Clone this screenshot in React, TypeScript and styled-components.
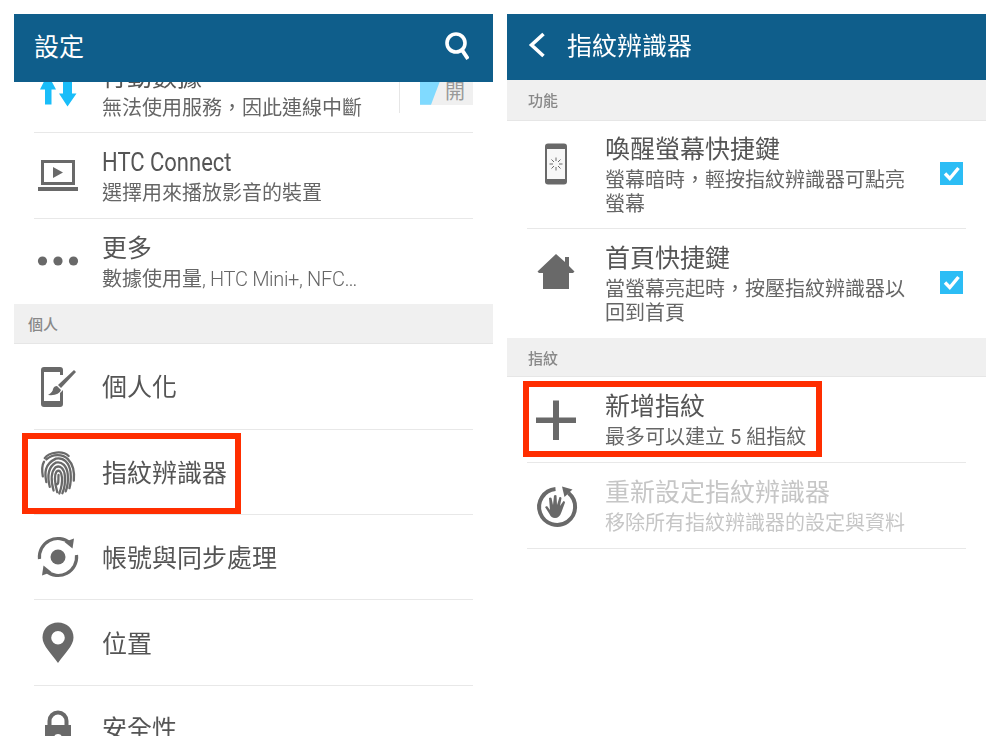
import React from "react";
import styled, { createGlobalStyle } from "styled-components";

const GlobalStyle = createGlobalStyle`
  * { box-sizing: border-box; }
  html, body { margin: 0; padding: 0; background: #fff; }
  body { font-family: Roboto, "Noto Sans CJK TC", sans-serif; }
`;

const Page = styled.div`
  display: flex;
  gap: 14px;
  padding: 14px 0 0 14px;
  width: 1000px;
  height: 736px;
  overflow: hidden;
  filter: blur(0.4px);
`;

const Panel = styled.section`
  flex: none;
  display: flex;
  flex-direction: column;
  width: 479px;
  height: 722px;
  overflow: hidden;
`;

const Header = styled.header<{ $height: number; $inset: number }>`
  position: relative;
  z-index: 2;
  flex: none;
  display: flex;
  align-items: center;
  height: ${(p) => p.$height}px;
  padding: 0 24px 0 ${(p) => p.$inset}px;
  background: #0f5e8b;
  color: #fff;
`;

const HeaderTitle = styled.h1`
  flex: 1;
  margin: 0;
  font-size: 25px;
  line-height: 32px;
  font-weight: 400;
`;

const BackButton = styled.span`
  display: flex;
  width: 39px;
  margin-top: -4px;
`;

const List = styled.div<{ $offset?: number }>`
  display: flex;
  flex-direction: column;
  margin-top: ${(p) => p.$offset ?? 0}px;
`;

const Section = styled.div<{ $inset: number; $height?: number; $lift?: number }>`
  flex: none;
  display: flex;
  align-items: center;
  height: ${(p) => p.$height ?? 40}px;
  padding: 0 0 ${(p) => p.$lift ?? 0}px ${(p) => p.$inset}px;
  background: #f0f0f0;
  border-bottom: 1px solid #e6e6e6;
  color: #888;
  font-size: 15px;
  font-weight: 500;
`;

const Row = styled.div<{ $height?: number; $last?: boolean }>`
  position: relative;
  flex: none;
  display: flex;
  align-items: center;
  height: ${(p) => p.$height ?? 85.4}px;
  margin: 0 20px;
  border-bottom: ${(p) => (p.$last ? "none" : "1px solid #e8e8e8")};
`;

const IconBox = styled.div<{ $width: number }>`
  flex: none;
  align-self: flex-start;
  display: flex;
  align-items: center;
  justify-content: center;
  width: ${(p) => p.$width}px;
  height: 85px;
`;

const Texts = styled.div`
  flex: 1;
  min-width: 0;
  margin-left: 20px;
`;

const Title = styled.div<{ $disabled?: boolean }>`
  padding-top: 4px;
  color: ${(p) => (p.$disabled ? "#c6c6c6" : "#555")};
  font-size: 25px;
  line-height: 32px;
  white-space: nowrap;
`;

const CondensedName = styled.span`
  display: inline-block;
  transform: scaleX(0.88);
  transform-origin: left center;
`;

const Sub = styled.div<{ $disabled?: boolean; $nowrap?: boolean }>`
  max-width: ${(p) => (p.$nowrap ? "none" : "302px")};
  margin: 2px 0 3px;
  color: ${(p) => (p.$disabled ? "#c6c6c6" : "#666")};
  font-size: 20px;
  line-height: 24px;
`;

const LightLatin = styled.span`
  font-weight: 300;
  letter-spacing: -0.33px;
`;

const Check = styled.div`
  flex: none;
  display: flex;
  align-items: center;
  justify-content: center;
  width: 23px;
  height: 23px;
  margin: 0 3px 3px 0;
  background: #2cbdf5;
`;

const SwitchRule = styled.div`
  flex: none;
  width: 1px;
  height: 45px;
  margin-right: 20px;
  background: #e6e6e6;
`;

const Switch = styled.div`
  position: relative;
  flex: none;
  display: flex;
  align-items: flex-end;
  justify-content: flex-end;
  width: 53px;
  height: 29px;
  padding-right: 8px;
  background: #f0f0f0;
  color: #999;
  font-size: 20px;
  line-height: 25px;
`;

const SwitchFill = styled.div`
  position: absolute;
  left: 0;
  top: 0;
  width: 22px;
  height: 100%;
  background: #80daff;
  clip-path: polygon(0 0, 100% 0, 50% 100%, 0 100%);
`;

const Highlight = styled.div<{ $left: number; $top: number; $width: number; $height: number; $border: number }>`
  position: absolute;
  z-index: 1;
  left: ${(p) => p.$left}px;
  top: ${(p) => p.$top}px;
  width: ${(p) => p.$width}px;
  height: ${(p) => p.$height}px;
  border: ${(p) => p.$border}px solid #ff2e00;
`;

const GREY = "#696969";

const Svg: React.FC<{ size?: number; children: React.ReactNode }> = ({ size = 48, children }) => (
  <svg width={size} height={size} viewBox={`0 0 ${size} ${size}`} fill="none">
    {children}
  </svg>
);

const SearchIcon = () => (
  <svg width="28" height="32" viewBox="0 0 28 32" fill="none" stroke="#fff">
    <circle cx="15" cy="11" r="9" strokeWidth="3.6" />
    <path d="M21 18 L27 27" strokeWidth="4" />
  </svg>
);

const BackIcon = () => (
  <svg width="18" height="26" viewBox="0 0 18 26" fill="none" stroke="#fff" strokeWidth="3.6">
    <path d="M15.5 2 L3.5 13 L15.5 24" />
  </svg>
);

const DataIcon = () => (
  <Svg>
    <path d="M6 22.5 L13.7 7 L22 22.5 H17.5 V37.5 H11 V22.5 Z" fill="#19bdf9" />
    <path d="M29 15 H38 V26.5 H42.5 L33.5 39.5 L25 26.5 H29 Z" fill="#19bdf9" />
  </Svg>
);

const ConnectIcon = () => (
  <Svg>
    <rect x="8.5" y="9.5" width="31" height="22" stroke={GREY} strokeWidth="3" />
    <path d="M19 15 L29 20.5 L19 26 Z" fill={GREY} />
    <rect x="4" y="35" width="40" height="4" fill={GREY} />
  </Svg>
);

const MoreIcon = () => (
  <Svg>
    <circle cx="8.5" cy="24" r="4.6" fill={GREY} />
    <circle cx="24" cy="24" r="4.6" fill={GREY} />
    <circle cx="39.5" cy="24" r="4.6" fill={GREY} />
  </Svg>
);

const BrushIcon = () => (
  <Svg>
    <path
      d="M10 4 H26 Q29 4 29 7 V12 H26 V9 H10 V38 H26 V30 L29 27 V41 Q29 44 26 44 H10 Q7 44 7 41 V7 Q7 4 10 4 Z"
      fill={GREY}
    />
    <path d="M40 7 L42 9 L27 25 L24 22 Z" fill={GREY} />
    <path d="M23 23 L27 27 Q25 33 14 32 Q19 29 19 26 Q20 23 23 23 Z" fill={GREY} />
  </Svg>
);

const FingerprintIcon = () => (
  <Svg>
    <g stroke={GREY} strokeWidth="2.3" strokeLinecap="round" transform="rotate(-5 24 24)">
      <path d="M12 9 C17 3 31 3 36 9" />
      <path d="M8.5 27 C8 21 8.5 16 11 12.5" />
      <path d="M13.5 10.5 C20 5.5 30 6 35 12 C40 18 40.5 26 39 34" />
      <path d="M11.5 33 C10.5 24 11 15 23 10.5 C31 9.5 36 16 36.5 25 C36.5 31 36 36 34 41" />
      <path d="M14.5 38 C13 28 13.5 18.5 22.5 14.5 C29 13.5 33.5 19 33.5 27 C33.5 33 32.5 39 30 44" />
      <path d="M18 42 C16.5 34 16 24 22 19 C27 17 30.5 21.5 30.5 28 C30.5 35 29 41 26.5 45.5" />
      <path d="M21.5 44 C20 36 18.8 28 22.5 23.5 C25.5 21.5 27.5 24 27.5 30 C27.5 35 26 40 23.5 45.5" />
      <path d="M24.3 27 C23.5 31 24 37 21.5 36" />
    </g>
  </Svg>
);

const SyncIcon = () => (
  <Svg>
    <circle cx="24" cy="24" r="7.5" fill={GREY} />
    <path d="M5.5 26 A18.5 18.5 0 0 1 36 10" stroke={GREY} strokeWidth="3.2" />
    <path d="M42.5 22 A18.5 18.5 0 0 1 12 38" stroke={GREY} strokeWidth="3.2" />
    <path d="M40 5.5 L38.5 15.5 L30.5 9 Z" fill={GREY} />
    <path d="M8 42.5 L9.5 32.5 L17.5 39 Z" fill={GREY} />
  </Svg>
);

const PinIcon = () => (
  <Svg>
    <path
      fillRule="evenodd"
      d="M24 3.5 C33 3.5 39.5 10 39.5 18.5 C39.5 27 30 35 24 44 C18 35 8.5 27 8.5 18.5 C8.5 10 15 3.5 24 3.5 Z M24 12 A6.8 6.8 0 1 0 24 25.6 A6.8 6.8 0 1 0 24 12 Z"
      fill={GREY}
    />
  </Svg>
);

const LockIcon = () => (
  <Svg>
    <path d="M15.5 22 V17 A8.5 8.5 0 0 1 32.5 17 V22" stroke={GREY} strokeWidth="4" />
    <path
      fillRule="evenodd"
      d="M11 21 H37 V48 H11 Z M24 30 A4 4 0 1 0 24 38 A4 4 0 1 0 24 30 Z"
      fill={GREY}
    />
  </Svg>
);

const WakeIcon = () => (
  <Svg>
    <rect x="13" y="3.5" width="22" height="41" rx="3" fill={GREY} />
    <rect x="15" y="9" width="18" height="30" fill="#f7f7f7" />
    <g stroke={GREY} strokeWidth="1">
      <path d="M24 17.5 V21 M24 27 V30.5 M17.5 24 H21 M27 24 H30.5 M19.5 19.5 L22 22 M26 26 L28.5 28.5 M28.5 19.5 L26 22 M22 26 L19.5 28.5" />
    </g>
  </Svg>
);

const HomeIcon = () => (
  <Svg>
    <path
      d="M24 6 L33 14 V9 H37 V18 L42.5 23.5 L41 25 H37 V41 H11 V25 H7 L5.5 23.5 Z"
      fill={GREY}
    />
  </Svg>
);

const PlusIcon = () => (
  <Svg>
    <rect x="4" y="21.5" width="40" height="5.5" fill={GREY} />
    <rect x="21" y="4.5" width="6" height="39.5" fill={GREY} />
  </Svg>
);

const ResetIcon = () => (
  <Svg>
    <path d="M23.5 7 A18 18 0 1 0 36.5 11" stroke={GREY} strokeWidth="4" />
    <path d="M30 4.5 L40.5 7.5 L32.5 15 Z" fill={GREY} />
    <path
      d="M13 25 L15 24 L18 28 L17 16 Q18.5 15 19.5 16 L21 23 L22 13.5 Q23.5 12.5 24.5 13.5 L25 23 L27.5 15 Q29 14.5 29.5 16 L28 24 L31.5 19 Q33 19 33 20.5 L29.5 30 Q27.5 36 23 36 Q19 36 17.5 32 Z"
      fill={GREY}
    />
  </Svg>
);

const CheckMark = () => (
  <svg width="19" height="19" viewBox="0 0 19 19" fill="none" stroke="#fff" strokeWidth="3.4">
    <path d="M3 9.5 L7.8 14.5 L16.5 4" />
  </svg>
);

const App: React.FC = () => (
  <>
    <GlobalStyle />
    <Page>
      <Panel>
        <Header $height={68} $inset={20}>
          <HeaderTitle>設定</HeaderTitle>
          <SearchIcon />
        </Header>
        <List $offset={-34}>
          <Row>
            <IconBox $width={48}>
              <DataIcon />
            </IconBox>
            <Texts>
              <Title>行動數據</Title>
              <Sub>無法使用服務，因此連線中斷</Sub>
            </Texts>
            <SwitchRule />
            <Switch>
              <SwitchFill />開
            </Switch>
          </Row>
          <Row>
            <IconBox $width={48}>
              <ConnectIcon />
            </IconBox>
            <Texts>
              <Title>
                <CondensedName>HTC Connect</CondensedName>
              </Title>
              <Sub>選擇用來播放影音的裝置</Sub>
            </Texts>
          </Row>
          <Row $last>
            <IconBox $width={48}>
              <MoreIcon />
            </IconBox>
            <Texts>
              <Title>更多</Title>
              <Sub $nowrap>
                數據使用量<LightLatin>, HTC Mini+, NFC…</LightLatin>
              </Sub>
            </Texts>
          </Row>
          <Section $inset={14}>個人</Section>
          <Row>
            <IconBox $width={48}>
              <BrushIcon />
            </IconBox>
            <Texts>
              <Title>個人化</Title>
            </Texts>
          </Row>
          <Row>
            <IconBox $width={48}>
              <FingerprintIcon />
            </IconBox>
            <Texts>
              <Title>指紋辨識器</Title>
            </Texts>
            <Highlight $left={-12} $top={3.5} $width={219} $height={81} $border={6.5} />
          </Row>
          <Row>
            <IconBox $width={48}>
              <SyncIcon />
            </IconBox>
            <Texts>
              <Title>帳號與同步處理</Title>
            </Texts>
          </Row>
          <Row>
            <IconBox $width={48}>
              <PinIcon />
            </IconBox>
            <Texts>
              <Title>位置</Title>
            </Texts>
          </Row>
          <Row>
            <IconBox $width={48}>
              <LockIcon />
            </IconBox>
            <Texts>
              <Title>安全性</Title>
            </Texts>
          </Row>
        </List>
      </Panel>
      <Panel>
        <Header $height={66} $inset={21}>
          <BackButton>
            <BackIcon />
          </BackButton>
          <HeaderTitle>指紋辨識器</HeaderTitle>
        </Header>
        <List>
          <Section $inset={21} $height={41} $lift={2}>
            功能
          </Section>
          <Row $height={108}>
            <IconBox $width={58}>
              <WakeIcon />
            </IconBox>
            <Texts>
              <Title>喚醒螢幕快捷鍵</Title>
              <Sub>螢幕暗時，輕按指紋辨識器可點亮螢幕</Sub>
            </Texts>
            <Check>
              <CheckMark />
            </Check>
          </Row>
          <Row $height={109} $last>
            <IconBox $width={58}>
              <HomeIcon />
            </IconBox>
            <Texts>
              <Title>首頁快捷鍵</Title>
              <Sub>當螢幕亮起時，按壓指紋辨識器以回到首頁</Sub>
            </Texts>
            <Check>
              <CheckMark />
            </Check>
          </Row>
          <Section $inset={21} $height={39}>
            指紋
          </Section>
          <Row $height={86}>
            <IconBox $width={58}>
              <PlusIcon />
            </IconBox>
            <Texts>
              <Title>新增指紋</Title>
              <Sub>最多可以建立 5 組指紋</Sub>
            </Texts>
            <Highlight $left={-4} $top={4} $width={299} $height={76} $border={6} />
          </Row>
          <Row $height={85.5}>
            <IconBox $width={58}>
              <ResetIcon />
            </IconBox>
            <Texts>
              <Title $disabled>重新設定指紋辨識器</Title>
              <Sub $disabled>移除所有指紋辨識器的設定與資料</Sub>
            </Texts>
          </Row>
        </List>
      </Panel>
    </Page>
  </>
);

export default App;
